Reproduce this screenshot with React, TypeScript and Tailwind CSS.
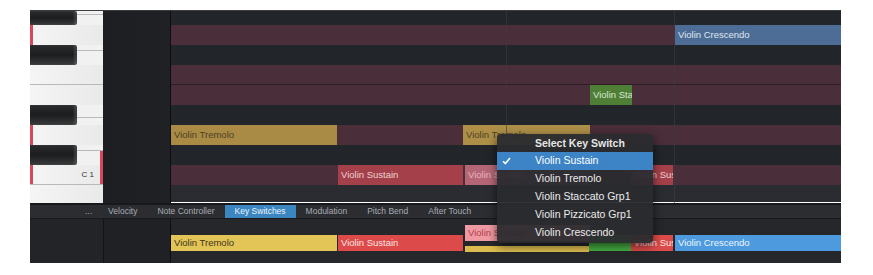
import React from 'react';

type Note = { x: number; w: number; label?: string; tone: string; top?: number; h?: number };

const GRID_X = 171;

// lanes of the piano roll, top to bottom (G# .. B0)
const LANES: { cls: string; notes: Note[] }[] = [
  { cls: 'h-[14px] bg-[#222529]', notes: [] },
  { cls: 'h-[20px] bg-[#4a2e39]', notes: [{ x: 675, w: 166, label: 'Violin Crescendo', tone: 'bg-[#4d6d96] text-[#dfe6ef]' }] },
  { cls: 'h-[20px] bg-[#222529]', notes: [] },
  { cls: 'h-[20px] bg-[#4a2e39] border-b border-[#2e1d24]', notes: [] },
  { cls: 'h-[20px] bg-[#4a2e39]', notes: [{ x: 590, w: 42, label: 'Violin Staccato', tone: 'bg-[#4f7f36] text-[#d9e6d0]' }] },
  { cls: 'h-[20px] bg-[#222529]', notes: [] },
  {
    cls: 'h-[20px] bg-[#4a2e39]',
    notes: [
      { x: 171, w: 166, label: 'Violin Tremolo', tone: 'bg-[#a98b46] text-[#4e3f22]' },
      { x: 463, w: 127, label: 'Violin Tremolo', tone: 'bg-[#ad8f48] text-[#4e3f22]' },
    ],
  },
  { cls: 'h-[20px] bg-[#222529]', notes: [] },
  {
    cls: 'h-[20px] bg-[#4a2e39]',
    notes: [
      { x: 338, w: 125, label: 'Violin Sustain', tone: 'bg-[#a4404a] text-[#ecd2d2]' },
      { x: 465, w: 125, label: 'Violin Sustain', tone: 'bg-[#b46676] text-[#e8b4bc]' },
      { x: 631, w: 42, label: 'Violin Sustain', tone: 'bg-[#a4404a] text-[#ecd2d2]' },
    ],
  },
  { cls: 'h-[17px] bg-[#2a2c31]', notes: [] },
];

const CONTROLLER: Note[] = [
  { x: 171, w: 166, top: 16, h: 16, label: 'Violin Tremolo', tone: 'bg-[#e3c456] text-[#3d3520]' },
  { x: 338, w: 125, top: 16, h: 16, label: 'Violin Sustain', tone: 'bg-[#dc4b49] text-[#fbe3e3]' },
  { x: 465, w: 124, top: 27, h: 6, tone: 'bg-[#dcbc4e]' },
  { x: 465, w: 125, top: 6, h: 16, label: 'Violin Sustain', tone: 'bg-[#ef9aa2] text-[#b3404e]' },
  { x: 589, w: 42, top: 16, h: 16, tone: 'bg-[#46b043]' },
  { x: 631, w: 42, top: 16, h: 16, label: 'Violin Sustain', tone: 'bg-[#dc4b49] text-[#fbe3e3]' },
  { x: 675, w: 166, top: 16, h: 16, label: 'Violin Crescendo', tone: 'bg-[#4d9ade] text-[#eef6ff]' },
];

const TABS = ['Velocity', 'Note Controller', 'Key Switches', 'Modulation', 'Pitch Bend', 'After Touch'];

const MENU = ['Violin Sustain', 'Violin Tremolo', 'Violin Staccato Grp1', 'Violin Pizzicato Grp1', 'Violin Crescendo'];

function Block({ n }: { n: Note }) {
  const sized = n.h !== undefined;
  return (
    <div
      className={`absolute overflow-hidden whitespace-nowrap pl-[3px] text-[9.5px] ${sized ? 'leading-[16px]' : 'top-0 bottom-0 leading-[20px]'} ${n.tone}`}
      style={{ left: n.x - GRID_X, width: n.w, top: n.top, height: n.h }}
    >
      {n.label}
    </div>
  );
}

function BlackRow({ h, line, children }: { h: string; line: string; children?: React.ReactNode }) {
  return (
    <div className={`flex ${h}`}>
      <div className="w-[47px] rounded-r-[2px] bg-gradient-to-b from-[#2b2c2e] via-[#1c1d1f] to-[#3a3b3d] shadow-[inset_-3px_0_2px_rgba(255,255,255,0.12)]" />
      <div className="flex flex-1 flex-col bg-[#f1f1f1]">
        <div className={`${line} border-b border-[#b9b9b9]`} />
        {children}
      </div>
    </div>
  );
}

function WhiteRow({ h, mark, border, children }: { h: string; mark?: boolean; border?: boolean; children?: React.ReactNode }) {
  return (
    <div className={`flex ${h} bg-gradient-to-r from-[#f5f5f5] to-[#e9e9e9] ${border ? 'border-b border-[#b9b9b9]' : ''}`}>
      <div className={`w-[3px] ${mark ? 'bg-[#d9475a]' : ''}`} />
      <div className="flex flex-1 items-center justify-end">{children}</div>
    </div>
  );
}

function Piano() {
  return (
    <div className="flex w-[73px] flex-col">
      <BlackRow h="h-[14px]" line="h-[4px]" />
      <WhiteRow h="h-[20px]" mark />
      <BlackRow h="h-[20px]" line="h-[6px]" />
      <WhiteRow h="h-[20px]" border />
      <WhiteRow h="h-[20px]" />
      <BlackRow h="h-[20px]" line="h-[13px]" />
      <WhiteRow h="h-[20px]" mark />
      <BlackRow h="h-[20px]" line="h-[6px]">
        <div className="ml-auto w-[3px] flex-1 bg-[#d9475a]" />
      </BlackRow>
      <WhiteRow h="h-[20px]" mark border>
        <span className="mr-[6px] text-[8px] text-[#333]">C 1</span>
        <div className="h-full w-[3px] bg-[#d9475a]" />
      </WhiteRow>
      <WhiteRow h="h-[18px]" />
    </div>
  );
}

function KeySwitchMenu() {
  return (
    <div className="absolute left-[467px] top-[123px] w-[156px] rounded-[4px] bg-[#2a2b2f]/95 py-[1px] text-[10.5px] text-[#ececec] shadow-[0_3px_10px_rgba(0,0,0,0.6)]">
      <div className="flex h-[17px] items-center pl-[38px] font-bold text-[#e6e6e6]">Select Key Switch</div>
      {MENU.map((m, i) => (
        <div key={m} className={`relative flex h-[18px] items-center pl-[38px] ${i === 0 ? 'bg-[#3c84c6] text-white' : ''}`}>
          {i === 0 && (
            <svg className="absolute left-[5px] top-[5px]" width="9" height="8" viewBox="0 0 9 8">
              <path d="M1 4.2 L3.4 6.6 L8 1" fill="none" stroke="white" strokeWidth="1.5" />
            </svg>
          )}
          {m}
        </div>
      ))}
    </div>
  );
}

export default function App() {
  return (
    <div className="h-[275px] w-[873px] bg-white pl-[30px] pt-[10px] font-['Liberation_Sans',Arial,sans-serif]">
      <div className="relative w-[811px] overflow-hidden border-t border-[#3a3c40]">
        {/* piano roll */}
        <div className="flex">
          <Piano />
          <div className="w-[67px] bg-gradient-to-r from-[#1c1e22] to-[#1f2125]" />
          <div className="w-px bg-[#0d0e10]" />
          <div className="relative flex-1">
            {LANES.map((lane, i) => (
              <div key={i} className={`relative ${lane.cls}`}>
                {lane.notes.map((n, j) => (
                  <Block key={j} n={n} />
                ))}
              </div>
            ))}
            <div className="absolute bottom-0 left-[335px] top-0 w-px bg-[#3a3d42]/60" />
            <div className="absolute bottom-0 left-[503px] top-0 w-px bg-[#3a3d42]/60" />
          </div>
        </div>
        <div className="h-[2px] bg-[#17181b]" />

        {/* controller tabs */}
        <div className="flex h-[13px] items-stretch bg-[#2b2d31] pl-[49px] text-[8.5px] text-[#a9acb1]">
          <div className="flex items-center px-[6px]">...</div>
          {TABS.map((t) => (
            <div key={t} className={`flex items-center px-[10px] ${t === 'Key Switches' ? 'bg-[#3b86c1] text-[#eaf4fc]' : ''}`}>
              {t}
            </div>
          ))}
        </div>

        {/* key switch lane */}
        <div className="flex h-[45px] border-t border-[#18191c]">
          <div className="w-[73px] bg-[#222428]" />
          <div className="w-px bg-[#121315]" />
          <div className="w-[66px] bg-[#1f2125]" />
          <div className="w-px bg-[#0d0e10]" />
          <div className="relative flex-1 bg-[#25272b]">
            {CONTROLLER.map((n, j) => (
              <Block key={j} n={n} />
            ))}
          </div>
        </div>

        <KeySwitchMenu />
      </div>
    </div>
  );
}
